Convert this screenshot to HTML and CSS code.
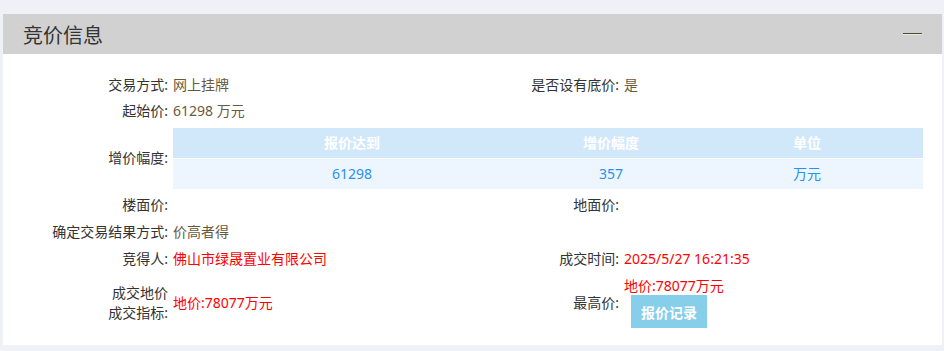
FILE: index.html
```html
<!DOCTYPE html>
<html>
<head>
    <title>竞价信息</title>
    <link rel="stylesheet" href="styles.css">
</head>
<body>
    <div class="panel">
        <div class="panel-head">
            <h2>竞价信息</h2>
            <span class="fold"></span>
        </div>

        <div class="info-grid">
            <div class="label">交易方式:</div>
            <div class="value">网上挂牌</div>
            <div class="label">是否设有底价:</div>
            <div class="value">是</div>

            <div class="label">起始价:</div>
            <div class="value span-3">61298 万元</div>

            <div class="label">增价幅度:</div>
            <div class="value span-3 table-cell">
                <table class="step-table">
                    <colgroup>
                        <col style="width: 358px">
                        <col style="width: 160px">
                        <col style="width: 232px">
                    </colgroup>
                    <thead>
                        <tr><th>报价达到</th><th>增价幅度</th><th>单位</th></tr>
                    </thead>
                    <tbody>
                        <tr><td>61298</td><td>357</td><td>万元</td></tr>
                    </tbody>
                </table>
            </div>

            <div class="label tall">楼面价:</div>
            <div class="value tall"></div>
            <div class="label tall">地面价:</div>
            <div class="value tall"></div>

            <div class="label tall">确定交易结果方式:</div>
            <div class="value tall span-3">价高者得</div>

            <div class="label tall">竞得人:</div>
            <div class="value tall red">佛山市绿晟置业有限公司</div>
            <div class="label tall">成交时间:</div>
            <div class="value tall red">2025/5/27 16:21:35</div>

            <div class="label two-line">成交地价<br>成交指标:</div>
            <div class="value red">地价:78077万元</div>
            <div class="label">最高价:</div>
            <div class="value top-bid">
                <div class="red">地价:78077万元</div>
                <button class="record-btn">报价记录</button>
            </div>
        </div>
    </div>
</body>
</html>
```

FILE: styles.css
```css
body {
    margin: 0;
    padding: 14px 2px 6px 3px;
    background: #eef2f6;
    font-family: "Noto Sans", "Noto Sans CJK SC", sans-serif;
    font-size: 14px;
    color: #333;
}

.panel {
    background: #fff;
    padding-bottom: 13px;
}

.panel-head {
    height: 40px;
    background: #d1d1d1;
    display: flex;
    align-items: center;
    justify-content: space-between;
    padding: 0 20px;
}

.panel-head h2 {
    margin: 0;
    font-size: 20px;
    font-weight: normal;
    color: #333;
}

.fold {
    width: 19px;
    height: 1px;
    background: #4a4a3c;
    box-shadow: 0 1px 0 #ecebdc;
    margin-top: -2px;
}

.info-grid {
    display: grid;
    grid-template-columns: 165px 353px 88px 299px;
    column-gap: 5px;
    padding: 18px 19px 0 0;
    align-items: center;
}

.label {
    text-align: right;
    white-space: nowrap;
    line-height: 18px;
    padding: 4px 0;
}

.value {
    line-height: 18px;
    padding: 4px 0;
    color: #6a5a3c;
    white-space: nowrap;
}

.tall {
    padding: 4px 0 5px;
}

.span-3 {
    grid-column: span 3;
}

.table-cell {
    padding: 4px 0 3px;
}

.red {
    color: #f00;
}

.step-table {
    width: 750px;
    border-collapse: collapse;
    table-layout: fixed;
    text-align: center;
}

.step-table th {
    height: 30px;
    padding: 0;
    background: #d1e8fb;
    color: #fff;
    font-weight: bold;
    border-bottom: 1px solid #fff;
}

.step-table td {
    height: 30px;
    padding: 0;
    background: #edf6fe;
    color: #2a8ff2;
}

.two-line {
    line-height: 20px;
}

.top-bid {
    padding: 4px 0;
}

.top-bid .red {
    line-height: 18px;
}

.record-btn {
    display: block;
    margin-left: 7px;
    width: 76px;
    height: 33px;
    border: none;
    padding: 0;
    background: #87ceeb;
    color: #fff;
    font-family: inherit;
    font-size: 14px;
    font-weight: bold;
    cursor: pointer;
}
```
